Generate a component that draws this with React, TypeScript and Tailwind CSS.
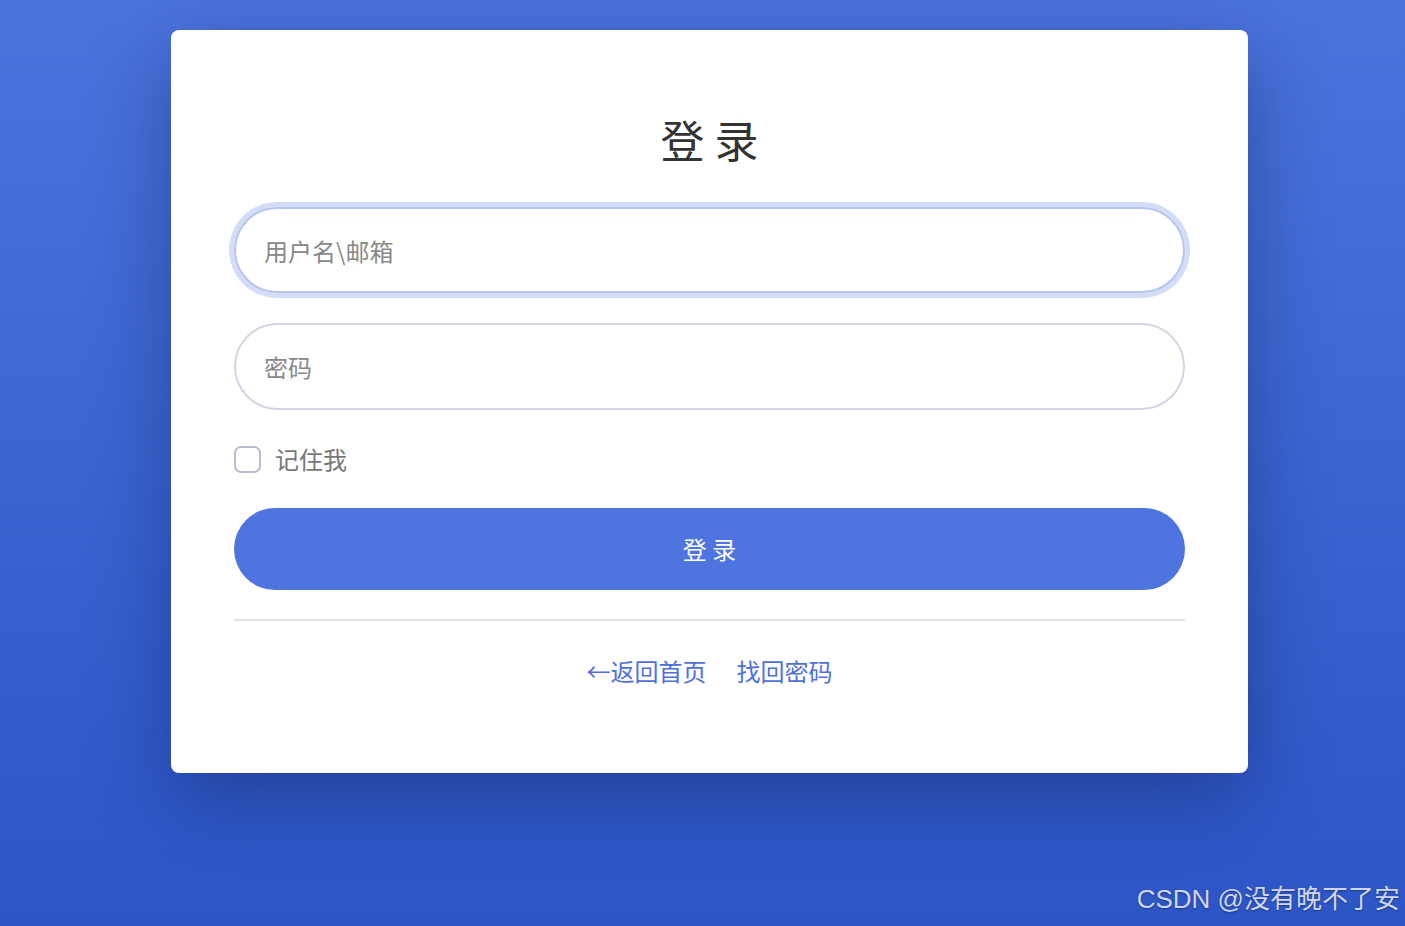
import { useState } from "react";

export default function App() {
  const [remember, setRemember] = useState(false);

  return (
    <div
      className="relative min-h-screen w-full overflow-hidden bg-gradient-to-b from-[#4b74dd] to-[#2c55c6] pt-[30px]"
      style={{ fontFamily: '"Noto Sans CJK SC", "Noto Sans", sans-serif' }}
    >
      <div className="ml-[171px] w-[1077px] h-[743px] rounded-[8px] bg-white px-[63px] pt-[84px] shadow-[0_24px_80px_rgba(10,20,70,0.38)]">
        <h1 className="text-center text-[44px] leading-[50px] font-normal text-[#333]">
          登 录
        </h1>

        <div className="mt-[43px] flex flex-col gap-[30px]">
          <input
            type="text"
            placeholder="用户名\邮箱"
            className="h-[86px] w-full rounded-full border-2 border-[#b6c4f0] px-7 text-[24px] text-[#333] outline-none ring-[5px] ring-[#d3ddf7] placeholder:text-[#888]"
          />
          <input
            type="password"
            placeholder="密码"
            className="h-[87px] w-full rounded-full border-2 border-[#d6d4e4] px-7 text-[24px] text-[#333] outline-none placeholder:text-[#888]"
          />
        </div>

        <label className="mt-[34px] flex items-center gap-[14px] cursor-pointer">
          <input
            type="checkbox"
            checked={remember}
            onChange={(e) => setRemember(e.target.checked)}
            className="h-[27px] w-[27px] appearance-none rounded-[7px] border-2 border-[#b9bdd2] bg-white checked:bg-[#4e75df] checked:border-[#4e75df]"
          />
          <span className="text-[24px] leading-[30px] text-[#777]">记住我</span>
        </label>

        <button className="mt-[34px] h-[82px] w-full rounded-full bg-[#4e75df] text-[24px] text-white">
          登 录
        </button>

        <div className="mt-[29px] h-[2px] w-full bg-[#e4e4e4]" />

        <div className="mt-[35px] flex justify-center gap-[30px] text-[24px] leading-[30px] text-[#4e6fdc]">
          <a href="#">←返回首页</a>
          <a href="#">找回密码</a>
        </div>
      </div>

      <div
        className="absolute bottom-[7px] right-[5px] text-[26px] text-[#cfd6ec] [text-shadow:0_1px_2px_rgba(0,0,0,0.35)]"
        style={{ fontFamily: '"Liberation Sans", "Noto Sans CJK SC", sans-serif' }}
      >
        CSDN @没有晚不了安
      </div>
    </div>
  );
}
